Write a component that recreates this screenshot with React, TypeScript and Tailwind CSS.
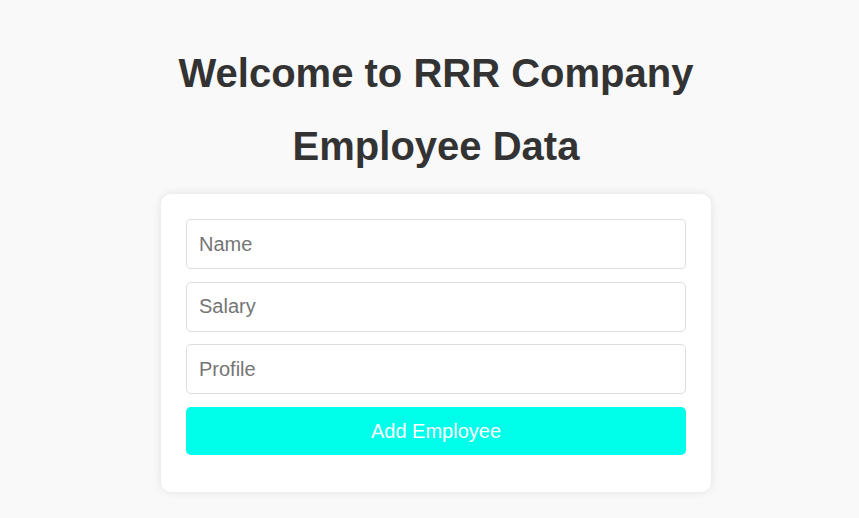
export default function App() {
  return (
    <div className="min-h-[518px] bg-[#f9f9f9] pt-[50px] pb-[26px] pl-[13px] font-['Liberation_Sans',Arial,sans-serif]">
      <h1 className="text-center text-[40px] font-bold leading-[46px] text-[#333]">Welcome to RRR Company</h1>
      <h2 className="mt-[27px] text-center text-[40px] font-bold leading-[46px] text-[#333]">Employee Data</h2>

      {/* Form card */}
      <div className="mx-auto mt-[25px] w-[550px] rounded-[10px] bg-white px-[25px] pt-[25px] pb-[37px] shadow-[0_0_10px_rgba(0,0,0,0.1)]">
        <div className="flex flex-col gap-[12.5px]">
          <input
            placeholder="Name"
            className="h-[50px] w-full rounded-[5px] border border-[#ddd] px-[12px] text-[20px] text-[#333] outline-none placeholder:text-[#757575]"
          />
          <input
            placeholder="Salary"
            className="h-[50px] w-full rounded-[5px] border border-[#ddd] px-[12px] text-[20px] text-[#333] outline-none placeholder:text-[#757575]"
          />
          <input
            placeholder="Profile"
            className="h-[50px] w-full rounded-[5px] border border-[#ddd] px-[12px] text-[20px] text-[#333] outline-none placeholder:text-[#757575]"
          />
          <button className="h-[48px] w-full rounded-[5px] bg-[#00ffea] text-[20px] text-white">Add Employee</button>
        </div>
      </div>
    </div>
  )
}
